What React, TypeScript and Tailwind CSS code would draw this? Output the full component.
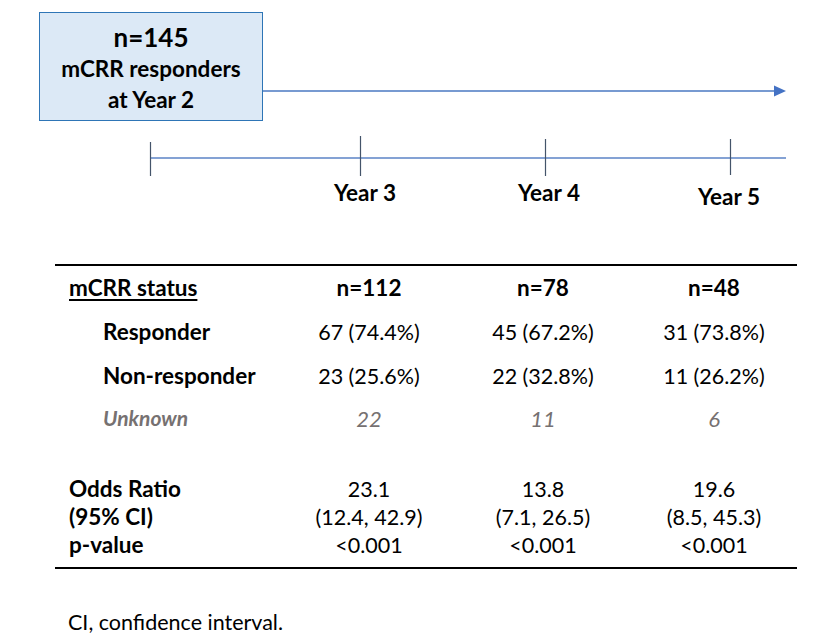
const rows = [
  { label: "Responder", values: ["67 (74.4%)", "45 (67.2%)", "31 (73.8%)"] },
  { label: "Non-responder", values: ["23 (25.6%)", "22 (32.8%)", "11 (26.2%)"] },
];

const stats = [
  { label: "Odds Ratio", values: ["23.1", "13.8", "19.6"] },
  { label: "(95% CI)", values: ["(12.4, 42.9)", "(7.1, 26.5)", "(8.5, 45.3)"] },
  { label: "p-value", values: ["<0.001", "<0.001", "<0.001"] },
];

const cols = "grid grid-cols-[235px_158px_190px_152px]";

export default function App() {
  return (
    <div className="w-[824px] h-[642px] bg-white text-black font-['Lato','Open_Sans',sans-serif] overflow-hidden">
      {/* Timeline diagram */}
      <div className="h-[264px]">
        <div className="flex pt-[12px] pl-[39px]">
          <div className="w-[224px] h-[109px] pt-[4px] bg-[#dce9f6] border border-[#2e75b6] flex flex-col items-center justify-center font-bold leading-[31px]">
            <div className="text-[26px]">n=145</div>
            <div className="text-[22.5px]">mCRR responders</div>
            <div className="text-[22.5px]">at Year 2</div>
          </div>
          <svg width="530" height="109" className="block">
            <line x1="0" y1="79" x2="512" y2="79" stroke="#4a78c2" strokeWidth="1.5" />
            <polygon points="511,73.5 523,79 511,84.5" fill="#4472c4" />
          </svg>
        </div>
        <svg width="824" height="60" className="block">
          <line x1="150" y1="37" x2="786" y2="37" stroke="#5b83c6" strokeWidth="1.5" />
          <line x1="150.5" y1="21" x2="150.5" y2="55" stroke="#44546a" strokeWidth="1.2" />
          <line x1="360.5" y1="15" x2="360.5" y2="55" stroke="#44546a" strokeWidth="1.2" />
          <line x1="545.5" y1="18" x2="545.5" y2="55" stroke="#44546a" strokeWidth="1.2" />
          <line x1="730.5" y1="18" x2="730.5" y2="54" stroke="#44546a" strokeWidth="1.2" />
        </svg>
        <div className="flex pl-[315px] text-[22.5px] font-bold leading-[24px]">
          <div className="w-[100px] text-center">Year 3</div>
          <div className="w-[84px]" />
          <div className="w-[100px] text-center">Year 4</div>
          <div className="w-[80px]" />
          <div className="w-[100px] text-center mt-1">Year 5</div>
        </div>
      </div>

      {/* Table */}
      <div className="ml-[55px] w-[742px] border-t-2 border-b-2 border-black text-[21.5px] pb-[11px]">
        <div className={`${cols} h-[44px] items-center font-bold text-[22.5px]`}>
          <div className="pl-[14px] underline underline-offset-[3px]">mCRR status</div>
          <div className="text-center">n=112</div>
          <div className="text-center">n=78</div>
          <div className="text-center">n=48</div>
        </div>
        {rows.map((r) => (
          <div key={r.label} className={`${cols} h-[44px] items-center`}>
            <div className="pl-[48px] font-bold text-[22.5px]">{r.label}</div>
            {r.values.map((v, i) => (
              <div key={i} className="text-center">{v}</div>
            ))}
          </div>
        ))}
        <div className={`${cols} h-[40px] items-center italic text-[#767171]`}>
          <div className="pl-[48px] font-bold text-[21px]">Unknown</div>
          <div className="text-center text-[22px]">22</div>
          <div className="text-center text-[22px]">11</div>
          <div className="text-center text-[22px]">6</div>
        </div>
        <div className="h-[34px]" />
        {stats.map((s) => (
          <div key={s.label} className={`${cols} h-[28px] items-center`}>
            <div className="pl-[14px] font-bold text-[22.5px]">{s.label}</div>
            {s.values.map((v, i) => (
              <div key={i} className="text-center">{v}</div>
            ))}
          </div>
        ))}
      </div>

      <div className="mt-[37px] ml-[68px] text-[21.5px]">CI, confidence interval.</div>
    </div>
  );
}
